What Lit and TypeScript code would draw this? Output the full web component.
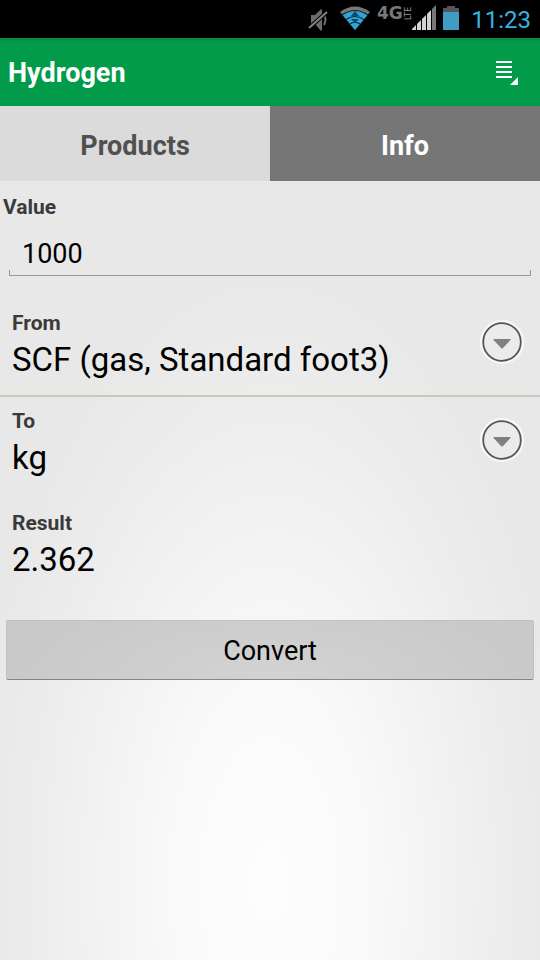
import { LitElement, css, html, svg } from "lit";
import { customElement, property, state } from "lit/decorators.js";

const chevron = html`
  <svg class="drop" viewBox="0 0 44 44" aria-hidden="true">
    <circle cx="22" cy="22" r="20.5" fill="none" stroke="#f8f8f8" stroke-width="3" />
    <circle cx="22" cy="22" r="18.8" fill="#ebebeb" stroke="#555" stroke-width="1.8" />
    <path d="M14 19h16q1.200 0 .4 1L23 28q-1 1-2 0L13.600 20q-.8-1 .4-1z" fill="#808080" />
  </svg>
`;

@customElement("status-bar")
export class StatusBar extends LitElement {
  static styles = css`
    :host {
      display: flex;
      justify-content: flex-end;
      align-items: center;
      height: 38px;
      padding-right: 9px;
      background: #000;
      color: #33b5e5;
      font: 24px/38px Roboto, "Noto Sans", sans-serif;
    }
    svg {
      display: block;
      height: 38px;
      flex: none;
    }
    time { padding-top: 2px; }
    .mute { width: 22px; margin-right: 9px; }
    .wifi { width: 32px; margin-right: 6px; }
    .network { width: 35px; }
    .signal { width: 24px; margin-right: 7px; }
    .battery { width: 16px; margin-right: 12px; }
    .gen {
      font: bold 17px "DejaVu Sans", sans-serif;
      fill: #777;
    }
    .lte {
      font: 8px "DejaVu Sans", sans-serif;
      fill: #999;
    }
  `;

  render() {
    const bars = [0, 1, 2, 3, 4];
    return html`
      <svg class="mute" viewBox="0 0 22 38" role="img" aria-label="Muted">
        <path d="M3 15h4l6-6 1 1v20l-1 1-6-7H3z" fill="#6b6b6b" />
        <path d="M16 15q3 4 0 10" fill="none" stroke="#6b6b6b" stroke-width="2" />
        <path d="M1 28L19 12" stroke="#000" stroke-width="4" />
        <path d="M1 28L19 12" stroke="#858585" stroke-width="2" />
      </svg>
      <svg class="wifi" viewBox="0 0 32 38" role="img" aria-label="Wi-Fi">
        <path d="M1 12Q16 1 31 12L16 30z" fill="#777" />
        <path d="M4 15.500Q16 7.500 28 15.500L16 30z" fill="#2fa5d8" />
        <path d="M3 15Q16 6 29 15M7 19.500Q16 13.500 25 19.500M11 24Q16 20.500 21 24"
          fill="none" stroke="#062a3b" stroke-width="1.200" />
        <path d="M16 11l-4 5h8zM16 23l-4-4h8z" fill="#0b4a68" />
      </svg>
      <svg class="network" viewBox="0 0 35 38">
        <text class="gen" x="0" y="19">4G</text>
        <text class="lte" transform="translate(34 20) rotate(-90)">LTE</text>
      </svg>
      <svg class="signal" viewBox="0 0 24 38" role="img" aria-label="Signal">
        ${bars.map(
          (i) => svg`<path d="M${i * 5} 30V${29 - i * 5}l4 -4V30z" fill=${i === 4 ? "#777" : "#d2d2d2"} />`
        )}
      </svg>
      <svg class="battery" viewBox="0 0 16 38" role="img" aria-label="Battery">
        <path d="M4 6h8v2h4v4H0V8h4z" fill="#555" />
        <path d="M0 12h16v18H0z" fill="#3f9cc4" />
      </svg>
      <time>11:23</time>
    `;
  }
}

@customElement("unit-picker")
export class UnitPicker extends LitElement {
  @property() label = "";
  @property({ type: Array }) units: string[] = [];

  static styles = css`
    :host {
      display: grid;
      grid-template-columns: 1fr 44px;
      grid-template-rows: 28px 46px;
      padding: 10px 16px 12px 12px;
    }
    label {
      grid-area: 1 / 1;
      font: bold 21px/28px Roboto, "Noto Sans", sans-serif;
      color: #3a3a3a;
    }
    select {
      grid-area: 2 / 1 / 3 / 3;
      appearance: none;
      min-width: 0;
      margin: 0;
      padding: 0;
      border: 0;
      background: none;
      color: #000;
      font: 33px/46px Roboto, "Noto Sans", sans-serif;
    }
    .drop {
      grid-area: 1 / 2 / 3 / 3;
      width: 44px;
      height: 44px;
      margin-top: 11px;
      pointer-events: none;
      z-index: 1;
    }
  `;

  render() {
    return html`
      <label for="unit">${this.label}</label>
      <select id="unit">
        ${this.units.map((u) => html`<option>${u}</option>`)}
      </select>
      ${chevron}
    `;
  }
}

@customElement("app-root")
export class AppRoot extends LitElement {
  @state() private result = "2.362";

  static styles = css`
    :host {
      display: flex;
      flex-direction: column;
      min-height: 100vh;
      font-family: Roboto, "Noto Sans", sans-serif;
      color: #000;
    }
    header {
      display: flex;
      justify-content: space-between;
      align-items: center;
      box-sizing: border-box;
      height: 68px;
      padding: 2px 20px 0 8px;
      background: linear-gradient(#038a43, #029b49 4px);
    }
    h1 {
      margin: 0;
      font-size: 27px;
      line-height: 36px;
      color: #fff;
    }
    button {
      margin: 0;
      border: 0;
      font-family: inherit;
    }
    .menu {
      padding: 0;
      background: none;
    }
    .menu svg {
      display: block;
      width: 24px;
      height: 26px;
    }
    nav {
      display: grid;
      grid-template-columns: 1fr 1fr;
    }
    .tab {
      height: 75px;
      padding: 4px 0 0;
      background: #dbdbdb;
      color: #505050;
      font-size: 27px;
      font-weight: bold;
    }
    .tab.active {
      background: #767676;
      color: #fff;
    }
    main {
      flex: 1;
      display: flex;
      flex-direction: column;
      background: radial-gradient(ellipse 56% 80% at 50% 90%, #fdfdfd 0%, #fafafa 30%, #ececec 80%, #e8e8e8 100%);
    }
    .caption {
      font-size: 21px;
      font-weight: bold;
      line-height: 28px;
      color: #3a3a3a;
    }
    .value {
      margin: 12px 3px 0;
    }
    .amount {
      box-sizing: border-box;
      height: 55px;
      margin: 0 9px 23px;
      padding: 10px 13px 0;
      border: 0;
      border-radius: 0;
      color: #000;
      font-family: inherit;
      font-size: 27px;
      background:
        linear-gradient(#999, #999) left bottom / 1px 6px no-repeat,
        linear-gradient(#999, #999) right bottom / 1px 6px no-repeat,
        linear-gradient(#999, #999) left bottom / 100% 1px no-repeat;
    }
    .divided {
      border-bottom: 2px solid #c9c9bb;
    }
    .result {
      display: flex;
      flex-direction: column;
      padding: 16px 12px 12px;
    }
    output {
      font-size: 33px;
      line-height: 46px;
    }
    .convert {
      height: 60px;
      margin: 25px 6px;
      padding: 2px 0 0;
      border: 1px solid #c0c0c0;
      border-bottom-color: #858585;
      border-radius: 2px;
      background: radial-gradient(ellipse 50% 160% at 50% 100%, #d3d3d3, #c9c9c9);
      color: #000;
      font-size: 27px;
    }
  `;

  render() {
    return html`
      <status-bar></status-bar>
      <header>
        <h1>Hydrogen</h1>
        <button class="menu" aria-label="Menu">
          <svg viewBox="0 0 24 26">
            <path d="M0 2h16M0 7h16M0 12h16M0 17h16" stroke="#fff" stroke-width="2" />
            <path d="M22 17v8h-8z" fill="#fff" />
          </svg>
        </button>
      </header>
      <nav>
        <button class="tab">Products</button>
        <button class="tab active">Info</button>
      </nav>
      <main>
        <label class="caption value" for="amount">Value</label>
        <input class="amount" id="amount" inputmode="decimal" value="1000" />
        <unit-picker class="divided" label="From" .units=${["SCF (gas, Standard foot3)", "kg"]}></unit-picker>
        <unit-picker label="To" .units=${["kg", "SCF (gas, Standard foot3)"]}></unit-picker>
        <div class="result">
          <label class="caption" for="result">Result</label>
          <output id="result">${this.result}</output>
        </div>
        <button class="convert">Convert</button>
      </main>
    `;
  }
}
